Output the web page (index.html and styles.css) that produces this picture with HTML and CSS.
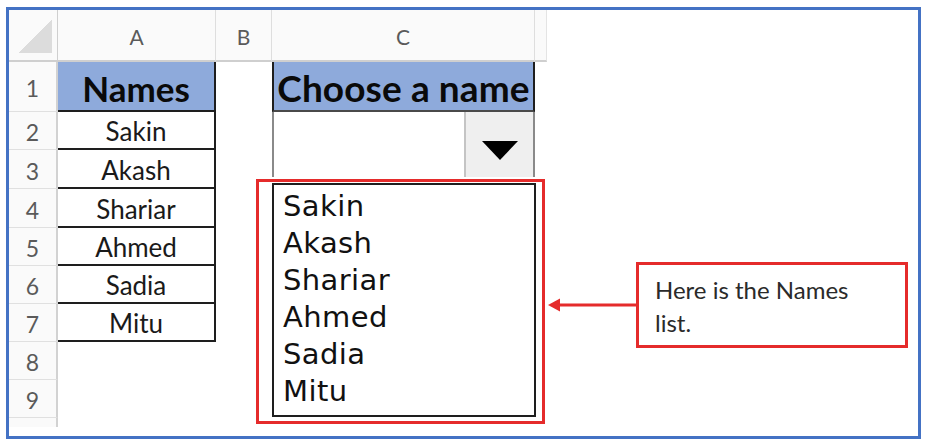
FILE: index.html
```html
<!doctype html>
<html>
<head>
  <title>Names dropdown</title>
  <link rel="stylesheet" href="styles.css">
</head>
<body>
  <div class="frame">
    <div class="sheet">
      <div class="corner"><span></span></div>
      <div class="col-head">A</div>
      <div class="col-head">B</div>
      <div class="col-head">C</div>
      <div class="col-head edge"></div>

      <div class="row-head">1</div>
      <div class="cell title names">Names</div>
      <div class="cell"></div>
      <div class="cell title choose">Choose a name</div>
      <div class="cell"></div>

      <div class="row-head">2</div>
      <div class="cell name">Sakin</div>
      <div class="cell"></div>
      <!-- data validation box, covers C2 and the top of C3 -->
      <div class="combo"><span class="combo-btn"><i class="caret"></i></span></div>
      <div class="cell"></div>

      <div class="row-head">3</div>
      <div class="cell name">Akash</div>
      <div class="cell"></div>
      <div class="cell"></div>

      <div class="row-head">4</div>
      <div class="cell name">Shariar</div>
      <div class="cell"></div>
      <div class="cell"></div>
      <div class="cell"></div>

      <div class="row-head">5</div>
      <div class="cell name">Ahmed</div>
      <div class="cell"></div>
      <div class="cell"></div>
      <div class="cell"></div>

      <div class="row-head">6</div>
      <div class="cell name">Sadia</div>
      <div class="cell"></div>
      <div class="cell"></div>
      <div class="cell"></div>

      <div class="row-head">7</div>
      <div class="cell name">Mitu</div>
      <div class="cell"></div>
      <div class="cell"></div>
      <div class="cell"></div>

      <div class="row-head">8</div>
      <div class="cell"></div>
      <div class="cell"></div>
      <div class="cell"></div>
      <div class="cell"></div>

      <div class="row-head">9</div>
      <div class="cell"></div>
      <div class="cell"></div>
      <div class="cell"></div>
      <div class="cell"></div>

      <div class="row-head last"></div>
    </div>

    <!-- open dropdown, highlighted -->
    <div class="popup">
      <ul class="list">
        <li>Sakin</li>
        <li>Akash</li>
        <li>Shariar</li>
        <li>Ahmed</li>
        <li>Sadia</li>
        <li>Mitu</li>
      </ul>
    </div>

    <svg class="arrow" width="88" height="14" viewBox="0 0 88 14">
      <rect x="10" y="5.5" width="78" height="3" fill="#e52b2b"/>
      <polygon points="0,7 12,0.5 12,13.5" fill="#e52b2b"/>
    </svg>

    <div class="note">Here is the Names list.</div>
  </div>
</body>
</html>
```

FILE: styles.css
```css
* {
  box-sizing: border-box;
  margin: 0;
  padding: 0;
}

body {
  background: #fff;
  font-family: Lato, "Open Sans", sans-serif;
  color: #222;
}

.frame {
  position: relative;
  margin: 7px 0 0 6px;
  width: 915px;
  height: 432px;
  border: 3px solid #4472c4;
  overflow: hidden;
}

.sheet {
  display: grid;
  grid-template-columns: 49px 158px 56px 263px 12px;
  grid-template-rows: 52px 50px 38px 39px 39px 38px 38px 38px 38px 38px 9px;
  width: 538px;
}

.corner {
  display: flex;
  padding: 10px 5px 7px 9px;
  background: #fafafa;
  border-right: 1px solid #cfcfcf;
  border-bottom: 2px solid #cfcfcf;
}

.corner span {
  flex: 1;
  background: linear-gradient(to bottom right, transparent 50%, #dcdcdc 50%);
}

.col-head {
  display: flex;
  align-items: center;
  justify-content: center;
  padding-top: 2px;
  background: #fafafa;
  border-right: 1px solid #dedede;
  border-bottom: 2px solid #cfcfcf;
  font-size: 21px;
  color: #5a5a5a;
}

.col-head.edge { border-right-color: #e4e4e4 }

.row-head {
  display: flex;
  align-items: center;
  justify-content: center;
  padding-top: 3px;
  background: #fafafa;
  border-right: 2px solid #d2d2d2;
  border-bottom: 1px solid #e0e0e0;
  font-size: 23px;
  color: #5a5a5a;
}

.row-head.last { border-bottom: none }

.cell {
  display: flex;
  align-items: center;
  justify-content: center;
  background: #fff;
}

.cell.title {
  background: #8eaadb;
  font-weight: 700;
  color: #0a0a0a;
  padding-top: 3px;
}

.names {
  font-size: 35px;
  border-right: 2px solid #1e1e1e;
  border-bottom: 2px solid #1e1e1e;
}

.choose {
  font-size: 37px;
  letter-spacing: 0.1px;
  border-left: 2px solid #1e1e1e;
  border-right: 2px solid #1e1e1e;
  border-bottom: 2px solid #4a4a4a;
}

.cell.name {
  font-size: 26px;
  padding-top: 2px;
  color: #1a1a1a;
  border-right: 2px solid #1e1e1e;
  border-bottom: 2px solid #1e1e1e;
}

.combo {
  grid-row: span 2;
  align-self: start;
  display: flex;
  justify-content: flex-end;
  height: 65px;
  background: #fff;
  border-left: 2px solid #8a8a8a;
  border-right: 2px solid #8a8a8a;
}

.combo-btn {
  display: flex;
  align-items: center;
  justify-content: center;
  width: 69px;
  padding-top: 11px;
  background: #efefef;
  border-left: 2px solid #c4c4c4;
}

.caret {
  width: 0;
  height: 0;
  border-left: 18px solid transparent;
  border-right: 18px solid transparent;
  border-top: 19px solid #000;
}

.popup {
  position: absolute;
  left: 247px;
  top: 169px;
  width: 289px;
  height: 245px;
  border: 3px solid #e52b2b;
}

.list {
  list-style: none;
  margin: 1px 0 0 13px;
  width: 264px;
  height: 234px;
  padding: 3px 0 0 9px;
  background: #fff;
  border: 2px solid #1e1e1e;
  font-family: "DejaVu Sans", sans-serif;
  font-size: 29px;
  letter-spacing: 0.4px;
  line-height: 37px;
  color: #111;
}

.arrow {
  position: absolute;
  left: 539px;
  top: 288px;
}

.note {
  position: absolute;
  left: 627px;
  top: 252px;
  width: 272px;
  height: 86px;
  padding: 8px 16px 0;
  border: 3px solid #e52b2b;
  background: #fff;
  font-size: 24px;
  line-height: 33px;
  color: #2a2a2a;
}
```
